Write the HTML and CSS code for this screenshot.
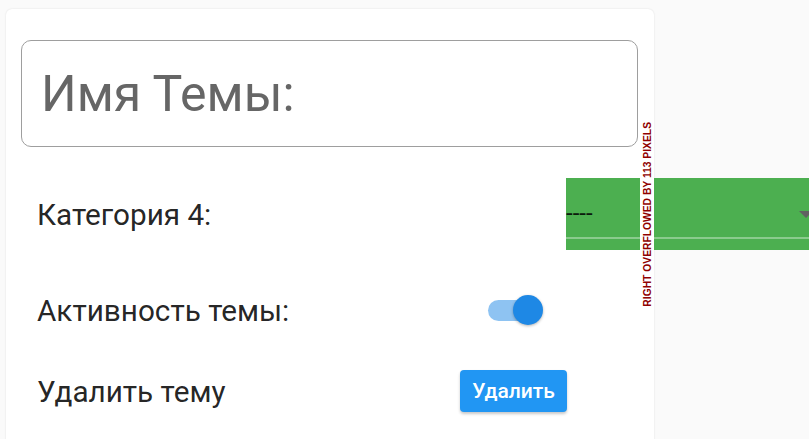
FILE: index.html
```html
<!DOCTYPE html>
<html>
  <head>
    <title>Тема</title>
    <meta charset="utf-8" />
    <link rel="stylesheet" href="styles.css">
  </head>
  <body>
    <div class="card">
      <div class="field">
        <span class="field-label">Имя Темы:</span>
      </div>

      <div class="row row-category">
        <span class="row-label label-category">Категория 4:</span>
        <div class="dropdown">
          <span class="dropdown-value">----</span>
          <span class="dropdown-arrow"></span>
          <span class="dropdown-line"></span>
        </div>
        <div class="overflow-mark"><span>RIGHT OVERFLOWED BY 113 PIXELS</span></div>
      </div>

      <div class="row">
        <span class="row-label label-active">Активность темы:</span>
        <div class="switch">
          <span class="switch-track"></span>
          <span class="switch-thumb"></span>
        </div>
      </div>

      <div class="row">
        <span class="row-label label-delete">Удалить тему</span>
        <a class="button">Удалить</a>
      </div>
    </div>
  </body>
</html>
```

FILE: styles.css
```css
html, body {
    margin: 0;
    padding: 0;
    height: 100%;
    overflow: hidden; }

body {
    background-color: #fafafa;
    font-family: Roboto, "Liberation Sans", sans-serif;
    color: rgba(0, 0, 0, 0.87); }

div.card {
    box-sizing: border-box;
    width: 648px;
    min-height: 470px;
    margin: 9px 0 0 6px;
    padding: 31px 16px 0 15px;
    background-color: #fff;
    border-radius: 6px;
    box-shadow: 0 0 2px rgba(0, 0, 0, 0.12); }

div.field {
    box-sizing: border-box;
    height: 107px;
    display: flex;
    align-items: center;
    padding-left: 19px;
    border: 1px solid #9e9e9e;
    border-radius: 10px; }

span.field-label {
    font-size: 50px;
    color: #666; }

div.row {
    display: flex;
    align-items: center;
    height: 48px;
    padding-left: 16px; }

div.row-category {
    position: relative;
    height: 72px;
    margin-top: 31px; }
div.row + div.row {
    margin-top: 36px; }
div.row + div.row + div.row {
    margin-top: 33px; }

span.row-label {
    flex: none;
    font-size: 29.7px; }
span.label-category {
    width: 529px; }
span.label-active {
    width: 451px; }
span.label-delete {
    width: 423px; }

div.dropdown {
    position: relative;
    flex: none;
    width: 260px;
    height: 72px;
    display: flex;
    align-items: center;
    background-color: #4caf50; }
span.dropdown-value {
    font-size: 24px;
    line-height: 24px;
    margin-top: -2px; }
span.dropdown-arrow {
    position: absolute;
    left: 233px;
    top: 33px;
    border-left: 7.5px solid transparent;
    border-right: 7.5px solid transparent;
    border-top: 7.5px solid #616161; }
span.dropdown-line {
    position: absolute;
    left: 0;
    right: 0;
    top: 59px;
    height: 1.5px;
    background-color: rgba(255, 255, 255, 0.35); }

div.overflow-mark {
    position: absolute;
    right: -16px;
    top: 50%;
    width: 14px;
    height: 194px;
    margin-top: -97px;
    display: flex;
    align-items: center;
    justify-content: center;
    background-color: #fff; }
div.overflow-mark span {
    writing-mode: vertical-rl;
    transform: rotate(180deg);
    white-space: nowrap;
    font-family: "Liberation Sans", Arial, sans-serif;
    font-size: 10.3px;
    font-weight: 700;
    color: #900000; }

div.switch {
    position: relative;
    width: 55px;
    height: 30px;
    display: flex;
    align-items: center; }
span.switch-track {
    width: 50px;
    height: 21px;
    border-radius: 10.5px;
    background-color: rgba(30, 136, 229, 0.5); }
span.switch-thumb {
    position: absolute;
    left: 24.5px;
    top: 0;
    width: 30px;
    height: 30px;
    border-radius: 50%;
    background-color: #1e88e5;
    box-shadow: 0 1px 3px rgba(0, 0, 0, 0.3); }

a.button {
    box-sizing: border-box;
    width: 107px;
    height: 42px;
    display: flex;
    align-items: center;
    justify-content: center;
    background-color: #2196f3;
    border-radius: 4px;
    box-shadow: 0 2px 3px rgba(0, 0, 0, 0.22);
    color: #fff;
    font-size: 21px;
    font-weight: 500; }
```
